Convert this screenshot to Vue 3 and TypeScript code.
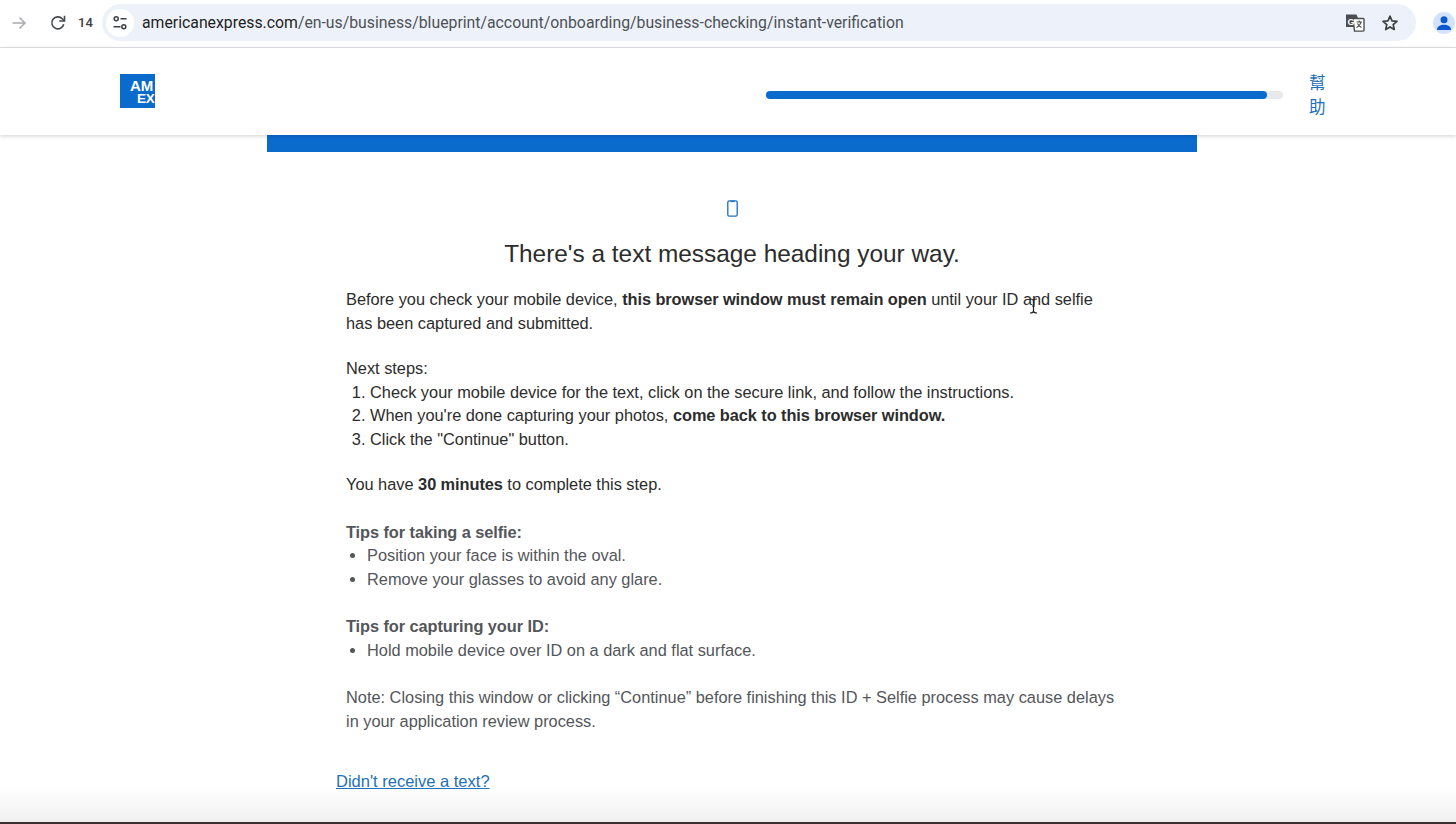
<template>
  <div class="page">
    <!-- browser toolbar -->
    <div class="toolbar">
      <svg class="tb-forward" width="16" height="16" viewBox="0 0 16 16" fill="none">
        <path d="M1.5 8h12.5M8.5 2.5 14 8l-5.500 5.500" stroke="#a9abae" stroke-width="1.500" />
      </svg>
      <svg class="tb-reload" width="18" height="18" viewBox="0 0 18 18" fill="none">
        <path d="M14.700 10.200A6 6 0 1 1 13.300 4.800L15 6.500" stroke="#45484c" stroke-width="1.600" />
        <path d="M15.500 1.800v5.200h-5.200" stroke="#45484c" stroke-width="1.600" />
      </svg>
      <span class="tb-count">14</span>
      <div class="omnibox">
        <div class="tune">
          <svg width="16" height="16" viewBox="0 0 16 16" fill="none" stroke="#3c4043" stroke-width="1.500">
            <circle cx="4.200" cy="3.800" r="2" />
            <path d="M8.500 3.800h6M1.500 11.800h7" />
            <circle cx="11.800" cy="11.800" r="2" />
          </svg>
        </div>
        <div class="url"><span class="url-host">americanexpress.com</span>/en-us/business/blueprint/account/onboarding/business-checking/instant-verification</div>
        <svg class="translate" width="20" height="18" viewBox="0 0 20 18">
          <path d="M1 0.500h10.500l1.500 3.500V13H1z" fill="#4a4d51" />
          <path d="M8 4.500h10.200a.8.8 0 0 1 .8.800v11a.8.8 0 0 1-.8.800H9.500z" fill="#fff" stroke="#4a4d51" stroke-width="1.400" />
          <text x="2.500" y="10.500" class="g">G</text>
          <path d="M11.500 8h5.500M14.200 6.500V8M16 8c-.5 2.500-2.500 4.500-4.500 5.500M12.500 9.500c.7 1.500 2 3 4 4" fill="none" stroke="#4a4d51" stroke-width="1.100" />
        </svg>
        <svg class="star" width="18" height="18" viewBox="0 0 18 18" fill="none">
          <path d="M9 2.200 11 6.800l5 .5-3.800 3.300 1.100 4.900L9 12.900l-4.300 2.600 1.100-4.900L2 7.300l5-.5z" stroke="#3c4043" stroke-width="1.700" stroke-linejoin="round" />
        </svg>
      </div>
      <div class="avatar">
        <svg width="14" height="14" viewBox="0 0 20 20" fill="#0b57d0">
          <circle cx="10" cy="5.500" r="5" />
          <path d="M0 20c0-5.500 4.500-7.500 10-7.500s10 2 10 7.500z" />
        </svg>
      </div>
    </div>

    <!-- amex header -->
    <header class="site-header">
      <div class="logo"><span>AM</span><span class="logo-ex">EX</span></div>
      <div class="progress">
        <div class="progress-fill" :style="{ width: progress + '%' }"></div>
      </div>
      <a class="help">幫助</a>
    </header>

    <main class="content">
      <div class="blue-bar"></div>

      <svg class="phone" width="11" height="17" viewBox="0 0 11 17" fill="none">
        <rect x="0.800" y="0.800" width="9.400" height="15.400" rx="1.500" stroke="#1a6fc0" stroke-width="1.300" />
        <path d="M3.500 1.500h4" stroke="#1a6fc0" stroke-width="1.200" />
      </svg>

      <h1 class="title">There's a text message heading your way.</h1>

      <div class="copy">
        <p class="intro">
          Before you check your mobile device, <b>this browser window must remain open</b> until your ID and selfie
          has been captured and submitted.
        </p>

        <p class="label">Next steps:</p>
        <ol class="steps">
          <li>Check your mobile device for the text, click on the secure link, and follow the instructions.</li>
          <li>When you're done capturing your photos, <b>come back to this browser window.</b></li>
          <li>Click the "Continue" button.</li>
        </ol>

        <p class="time">You have <b>30 minutes</b> to complete this step.</p>

        <div class="muted">
          <p class="tips-title"><b>Tips for taking a selfie:</b></p>
          <ul class="tips">
            <li v-for="tip in selfieTips" :key="tip">{{ tip }}</li>
          </ul>

          <p class="tips-title id-tips"><b>Tips for capturing your ID:</b></p>
          <ul class="tips">
            <li>Hold mobile device over ID on a dark and flat surface.</li>
          </ul>

          <p class="note">
            Note: Closing this window or clicking “Continue” before finishing this ID + Selfie process may cause delays
            in your application review process.
          </p>
        </div>
      </div>

      <a class="resend">Didn't receive a text?</a>
    </main>

    <!-- i-beam cursor over the text -->
    <svg class="cursor" width="9" height="16" viewBox="0 0 9 16" fill="none" stroke="#222" stroke-width="1.200">
      <path d="M1 1c2 0 3.500.5 3.500 2v10c0 1.500-1.500 2-3.500 2M8 1c-2 0-3.500.5-3.500 2v10c0 1.500 1.500 2 3.500 2M3 8h3" />
    </svg>

    <!-- fade and dark strip at the bottom of the video frame -->
    <div class="bottom-fade"></div>
    <div class="bottom-strip"></div>
  </div>
</template>

<script setup lang="ts">
const progress = 97

const selfieTips: string[] = [
  'Position your face is within the oval.',
  'Remove your glasses to avoid any glare.'
]
</script>

<style>
html,
body {
  margin: 0;
  background: #fff;
  overflow: hidden;
}
</style>

<style scoped>
.page {
  position: relative;
  width: 1456px;
  height: 824px;
  overflow: hidden;
  background: #fff;
  font-family: "Liberation Sans", Arial, "Noto Sans CJK TC", sans-serif;
  color: #2c2c2c;
}

.toolbar {
  height: 45px;
  display: flex;
  align-items: center;
  padding: 0 0 2px 11px;
  border-bottom: 1px solid #e3e3e3;
}

.tb-forward {
  flex: none;
}

.tb-reload {
  flex: none;
  margin-left: 22px;
}

.tb-count {
  width: 14px;
  margin-left: 11px;
  font-family: Roboto, "Liberation Sans", sans-serif;
  font-size: 13px;
  font-weight: 500;
  color: #3c4043;
}

.omnibox {
  width: 1314px;
  height: 37px;
  margin-left: 10px;
  display: flex;
  align-items: center;
  border-radius: 19px;
  background: #edf2fa;
  flex: none;
}

.tune {
  width: 28px;
  height: 28px;
  margin-left: 4px;
  border-radius: 50%;
  background: #fff;
  display: flex;
  align-items: center;
  justify-content: center;
  flex: none;
}

.url {
  flex: 1;
  margin-left: 8px;
  font-family: Roboto, "Liberation Sans", sans-serif;
  font-size: 15.800px;
  color: #4d5156;
  white-space: nowrap;
}

.url-host {
  color: #1f1f1f;
}

.translate {
  flex: none;
  margin-right: 16px;
}

.g {
  font-family: "Liberation Sans", sans-serif;
  font-size: 9px;
  font-weight: 700;
  fill: #fff;
}

.star {
  flex: none;
  margin-right: 17px;
}

.avatar {
  width: 22px;
  height: 22px;
  margin-left: 17px;
  margin-top: 1px;
  border-radius: 50%;
  background: #d3e3fd;
  display: flex;
  align-items: center;
  justify-content: center;
  flex: none;
}

.site-header {
  height: 87px;
  display: flex;
  align-items: center;
  background: #fff;
  box-shadow: 0 1px 4px rgba(0, 0, 0, 0.18);
  position: relative;
  z-index: 1;
}

.logo {
  width: 35px;
  height: 34px;
  margin-left: 120px;
  margin-top: -1px;
  padding: 5px 0 0 10px;
  box-sizing: border-box;
  background: #0a6bcd;
  overflow: hidden;
  color: #fff;
  font-size: 15px;
  font-weight: 700;
  line-height: 13px;
  letter-spacing: -0.200px;
  white-space: nowrap;
}

.logo span {
  display: block;
}

.logo-ex {
  margin-left: 7px;
  font-size: 13.500px;
}

.progress {
  width: 517px;
  height: 8px;
  margin-left: 611px;
  margin-top: 7px;
  border-radius: 4px;
  background: #e8e9ea;
}

.progress-fill {
  height: 100%;
  border-radius: 4px;
  background: #0a6bcd;
}

.help {
  width: 18px;
  margin-left: 26px;
  margin-top: 6px;
  font-size: 16.500px;
  line-height: 24px;
  color: #1e6fba;
}

.content {
  width: 930px;
  margin-left: 267px;
  display: flex;
  flex-direction: column;
}

.blue-bar {
  height: 17px;
  background: #0a6bcd;
}

.phone {
  align-self: center;
  margin-top: 48px;
}

.title {
  margin: 21.500px 0 0;
  text-align: center;
  font-size: 24.400px;
  line-height: 30px;
  font-weight: 400;
  color: #2c2c2c;
}

.copy {
  width: 773px;
  margin: 19.500px 0 0 79px;
  font-size: 16.350px;
  line-height: 23.500px;
}

.copy b {
  letter-spacing: -0.070px;
}

.copy p {
  margin: 0;
}

.copy .label {
  margin-top: 22px;
}

.steps {
  margin: 0;
  padding: 0 0 0 24px;
}

.copy .time {
  margin-top: 22px;
}

.muted {
  margin-top: 24px;
  color: #53565a;
}

.tips {
  margin: 0;
  padding: 0 0 0 21px;
}

.copy .id-tips {
  margin-top: 24px;
}

.copy .note {
  margin-top: 24px;
}

.resend {
  margin: 36px 0 0 69px;
  font-size: 16.500px;
  line-height: 24px;
  color: #1e6fba;
  text-decoration: underline;
}

.cursor {
  position: absolute;
  left: 1029px;
  top: 298px;
}

.bottom-fade {
  position: absolute;
  left: 0;
  right: 0;
  bottom: 2px;
  height: 34px;
  background: linear-gradient(to bottom, rgba(240, 240, 240, 0), #f0f0f0);
}

.bottom-strip {
  position: absolute;
  left: 0;
  right: 0;
  bottom: 0;
  height: 2px;
  background: #3a3230;
}
</style>
